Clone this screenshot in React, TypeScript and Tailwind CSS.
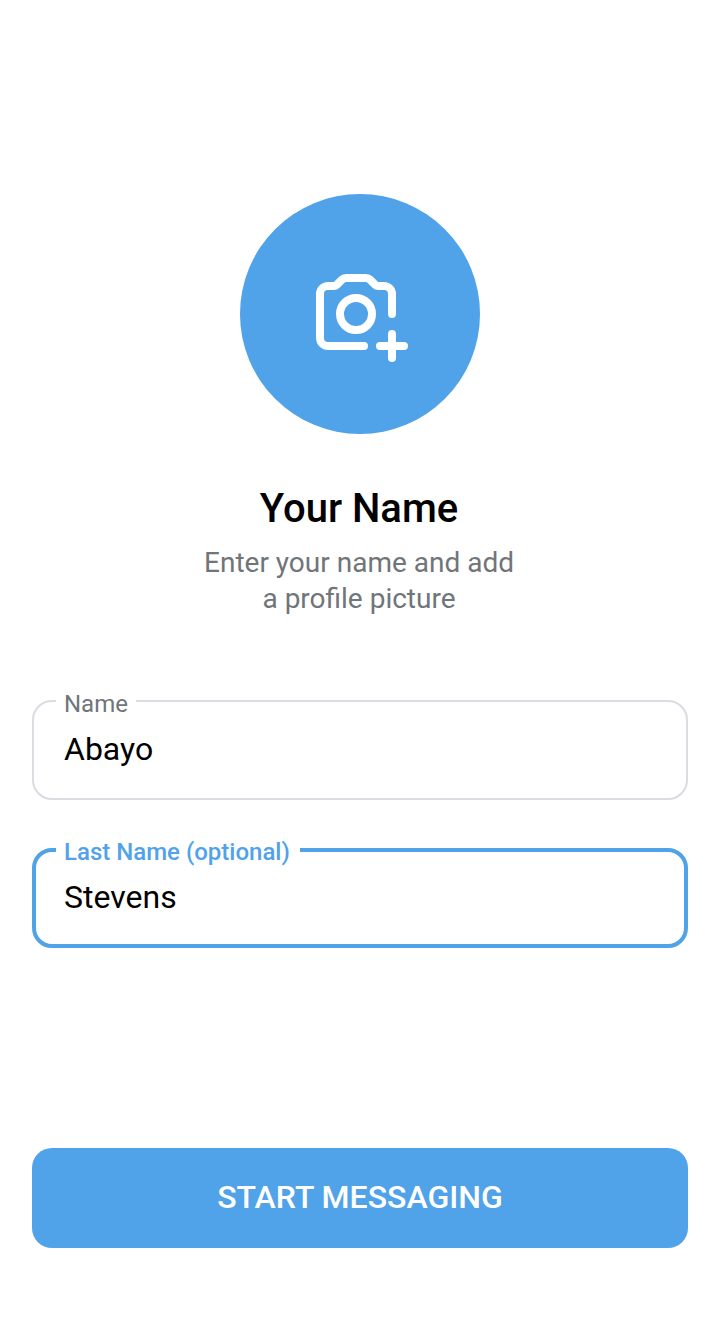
import React, { useState } from "react";

function AddPhotoIcon() {
  return (
    <svg className="h-24 w-24" viewBox="0 0 96 96" fill="none" stroke="white" strokeWidth="8" strokeLinecap="round" strokeLinejoin="round">
      <path d="M80 48V28a8 8 0 0 0-8-8H66.2c-1.2 0-2.3-.5-3.2-1.4l-5-5C57 12.6 55.6 12 54 12H34c-1.6 0-3 .6-4 1.6l-5 5c-.9.9-2 1.4-3.2 1.4H16a8 8 0 0 0-8 8V72a8 8 0 0 0 8 8H52" />
      <circle cx="44" cy="48" r="16" />
      <path d="M80 68V92M68 80H92" />
    </svg>
  );
}

type FieldProps = {
  label: string;
  initial: string;
  fieldClass: string;
  legendClass: string;
  inputClass: string;
};

function Field({ label, initial, fieldClass, legendClass, inputClass }: FieldProps) {
  const [value, setValue] = useState(initial);
  return (
    <fieldset className={fieldClass}>
      <legend className={legendClass}>{label}</legend>
      <input aria-label={label} value={value} onChange={(e) => setValue(e.target.value)} className={inputClass} />
    </fieldset>
  );
}

export default function App() {
  return (
    <main className="flex h-[1340px] w-[720px] flex-col items-center bg-white px-8 pt-[194px] font-['Roboto',sans-serif] text-black">
      <button aria-label="Add profile picture" className="flex h-60 w-60 shrink-0 items-center justify-center rounded-full bg-[#50a2e9]">
        <AddPhotoIcon />
      </button>
      <h1 className="mt-[51px] pr-[2px] text-[40px] leading-[48px] font-medium">Your Name</h1>
      <p className="mt-3 pr-[2px] text-center text-[28px] leading-9 text-[#707579]">
        Enter your name and add
        <br />a profile picture
      </p>
      <div className="mt-[71px] flex w-full flex-col gap-9">
        <Field
          label="Name"
          initial="Abayo"
          fieldClass="h-[112px] w-full rounded-[20px] border-2 border-[#dbdbe1] pl-[22px]"
          legendClass="h-[26px] px-2 text-2xl leading-8 text-[#707579]"
          inputClass="mt-[11px] block h-12 w-[600px] px-2 text-[32px] leading-10 outline-none"
        />
        <Field
          label="Last Name (optional)"
          initial="Stevens"
          fieldClass="h-[112px] w-full rounded-[20px] border-4 border-[#50a2e9] pl-5"
          legendClass="h-7 pr-2.5 pl-2 text-2xl leading-8 font-medium text-[#50a2e9]"
          inputClass="mt-[9px] block h-12 w-[600px] px-2 text-[32px] leading-10 outline-none"
        />
      </div>
      <button className="mt-[200px] h-[100px] w-full shrink-0 rounded-[20px] bg-[#50a2e9] pb-[2px] text-[32px] font-medium text-white">START MESSAGING</button>
    </main>
  );
}
